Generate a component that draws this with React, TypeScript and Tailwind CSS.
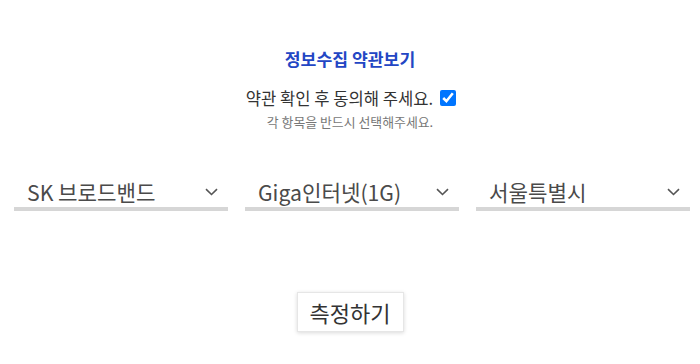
import React from "react";

const font = { fontFamily: '"Noto Sans CJK KR", "Noto Sans", sans-serif' };

function Chevron() {
  return (
    <svg width="13" height="8" viewBox="0 0 13 8" fill="none">
      <path d="M1 1.2 L6.5 6.5 L12 1.2" stroke="#555" strokeWidth="1.6" />
    </svg>
  );
}

function Select({ label }: { label: string }) {
  return (
    <div className="flex-1 flex flex-col">
      <div className="flex items-center justify-between h-[30px] pl-[13px] pr-[10px]">
        <span className="text-[21.2px] leading-[30px] text-[#4a4a4a]">{label}</span>
        <Chevron />
      </div>
      <div className="h-[4px] bg-[#d6d6d6]" />
    </div>
  );
}

export default function App() {
  return (
    <div className="w-[700px] h-[364px] bg-white flex flex-col items-center pt-[47px]" style={font}>
      <div className="text-[17.2px] leading-[24px] font-bold text-[#2346c4]">정보수집 약관보기</div>
      <div className="mt-[15px] flex items-center gap-[7px] h-[24px] pl-[2px]">
        <span className="text-[16.6px] leading-[24px] text-[#333]">약관 확인 후 동의해 주세요.</span>
        <input type="checkbox" defaultChecked className="w-[16px] h-[16px] m-0" />
      </div>
      <div className="mt-[4px] text-[12.9px] leading-[16px] text-[#777]">각 항목을 반드시 선택해주세요.</div>
      <div className="mt-[47px] w-full flex gap-[17px] pl-[14px] pr-[10px]">
        <Select label="SK 브로드밴드" />
        <Select label="Giga인터넷(1G)" />
        <Select label="서울특별시" />
      </div>
      <button className="mt-[81px] w-[107px] h-[40px] bg-white border border-[#e6e6e6] shadow-[0_1px_4px_rgba(0,0,0,0.15)] text-[22px] text-[#333] flex items-center justify-center">
        측정하기
      </button>
    </div>
  );
}
